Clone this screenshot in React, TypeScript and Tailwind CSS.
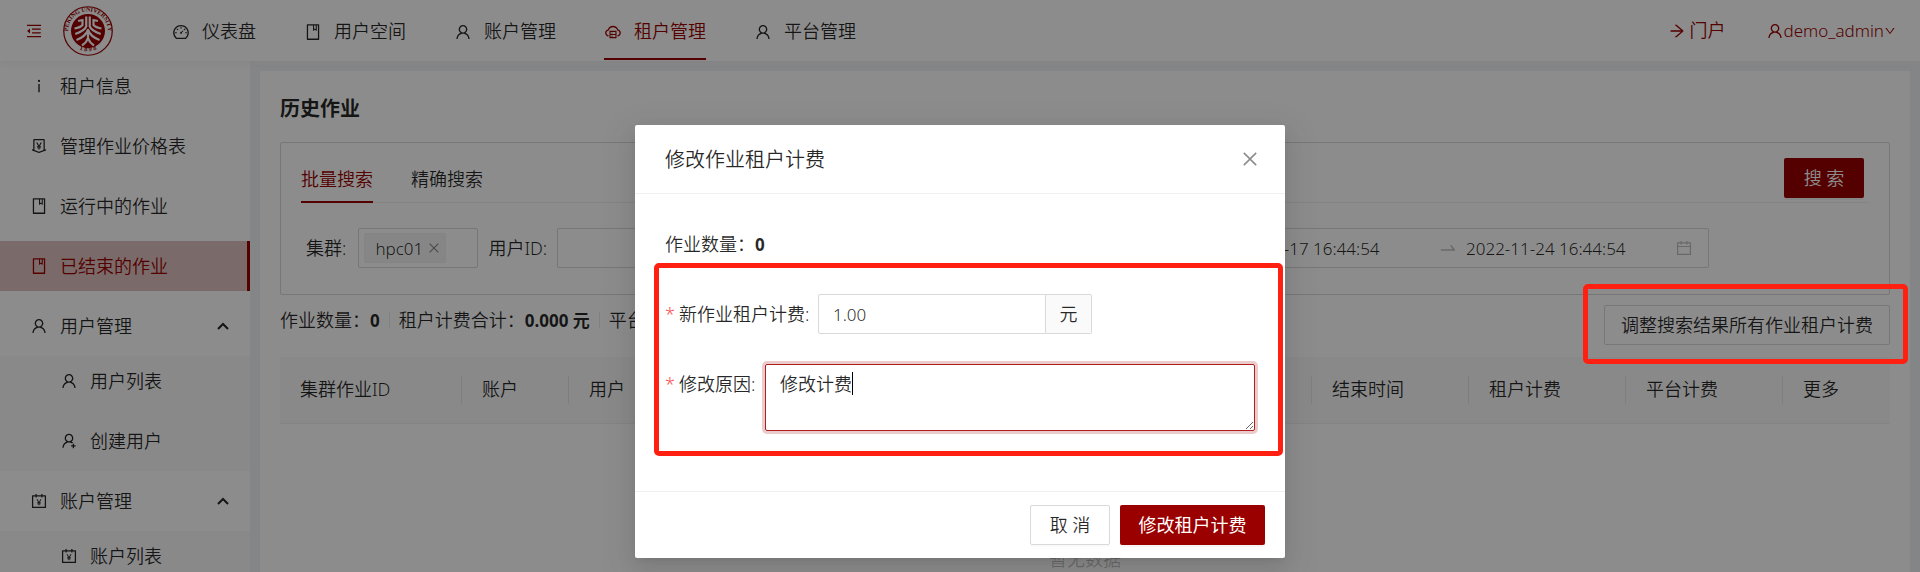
import type { ReactNode } from "react";
import type { IconType } from "react-icons";
import {
  AiOutlineAccountBook,
  AiOutlineArrowRight,
  AiOutlineBook,
  AiOutlineCalendar,
  AiOutlineClose,
  AiOutlineCloudServer,
  AiOutlineDashboard,
  AiOutlineDown,
  AiOutlineInfo,
  AiOutlineMenuFold,
  AiOutlineMoneyCollect,
  AiOutlineSwapRight,
  AiOutlineUser,
  AiOutlineUserAdd,
} from "react-icons/ai";

function Logo() {
  return (
    <svg viewBox="0 0 100 100" className="size-[50px] text-[#9b0000]" aria-hidden="true">
      <defs>
        <path id="logo-top" d="M 14 68 A 40 40 0 1 1 86 68" />
        <path id="logo-bottom" d="M 22 81 A 46 46 0 0 0 78 81" />
      </defs>
      <circle cx="50" cy="50" r="48.5" fill="none" stroke="currentColor" strokeWidth="2.4" />
      <circle cx="50" cy="50" r="34" fill="currentColor" />
      <text fill="currentColor" fontSize="12" fontWeight="700" fontFamily="Liberation Serif, serif" textAnchor="middle">
        <textPath href="#logo-top" startOffset="50%">PEKING UNIVERSITY</textPath>
      </text>
      <text fill="currentColor" fontSize="13" fontWeight="700" fontFamily="Liberation Serif, serif" textAnchor="middle">
        <textPath href="#logo-bottom" startOffset="50%">1 8 9 8</textPath>
      </text>
      <g fill="none" stroke="#fff" strokeWidth="4.4">
        <path d="M46.5 21v20q-3 8-22 15" />
        <path d="M53.5 21v20q3 8 22 15" />
        <path d="M30 30l9-2v10q-4 5-16 7" />
        <path d="M70 30l-9-2v10q4 5 16 7" />
        <path d="M50 48q-5 13-23 20M50 48q5 13 23 20" />
        <path d="M50 46v18q-3 9-12 15M50 64q3 9 12 15" />
      </g>
    </svg>
  );
}

const topNav: { label: string; icon: IconType; active?: boolean }[] = [
  { label: "仪表盘", icon: AiOutlineDashboard },
  { label: "用户空间", icon: AiOutlineBook },
  { label: "账户管理", icon: AiOutlineUser },
  { label: "租户管理", icon: AiOutlineCloudServer, active: true },
  { label: "平台管理", icon: AiOutlineUser },
];

function Header() {
  return (
    <header className="z-10 flex h-[61px] shrink-0 items-center bg-white pr-6 pl-[25px] shadow-[0_2px_8px_#f0f1f2]">
      <button aria-label="收起菜单" className="text-[#9b0000]">
        <AiOutlineMenuFold className="size-[18px]" />
      </button>
      <a href="#home" className="ml-5" aria-label="首页">
        <Logo />
      </a>
      <nav className="ml-[59px] flex h-full flex-1 gap-12">
        {topNav.map(({ label, icon: Icon, active }) => (
          <a
            key={label}
            href="#nav"
            className={
              active
                ? "mb-px flex items-center gap-3 border-b-2 border-[#9b0000] pt-[5px] text-[#9b0000]"
                : "mb-px flex items-center gap-3 border-b-2 border-transparent pt-[5px]"
            }
          >
            <Icon className="size-[18px]" />
            {label}
          </a>
        ))}
      </nav>
      <a href="#portal" className="flex items-center gap-1 text-[#9b0000]">
        <AiOutlineArrowRight className="size-[18px]" />
        门户
      </a>
      <button className="ml-10 flex items-center text-[17px] text-[#9b0000]">
        <AiOutlineUser className="size-[18px]" />
        demo_admin
        <AiOutlineDown className="size-3" />
      </button>
    </header>
  );
}

function SideItem({ icon: Icon, label, active, nested }: { icon: IconType; label: string; active?: boolean; nested?: boolean }) {
  const tone = active ? "border-r-3 border-[#9b0000] bg-[#dec4c1] text-[#9b0000]" : "";
  return (
    <li>
      <a href="#menu" className={`flex h-[50px] items-center gap-3 ${nested ? "pl-[60px]" : "pl-[30px]"} ${tone}`}>
        <Icon className="size-[18px]" />
        {label}
      </a>
    </li>
  );
}

function SideGroup({ icon: Icon, label, children }: { icon: IconType; label: string; children: ReactNode }) {
  return (
    <li className="-mb-[5px]">
      <button className="flex h-[50px] w-full items-center gap-3 pr-5 pl-[30px]">
        <Icon className="size-[18px]" />
        {label}
        <svg viewBox="0 0 14 14" className="ml-auto size-[14px]" fill="none" stroke="currentColor" strokeWidth="2">
          <path d="M2 10l5-5 5 5" />
        </svg>
      </button>
      <ul className="mt-[5px] flex flex-col gap-[10px] bg-[#fafafa] pb-[5px]">{children}</ul>
    </li>
  );
}

function Sidebar() {
  return (
    <aside className="w-[250px] shrink-0 overflow-hidden bg-white">
      <ul className="flex flex-col gap-[10px]">
        <SideItem icon={AiOutlineInfo} label="租户信息" />
        <SideItem icon={AiOutlineMoneyCollect} label="管理作业价格表" />
        <SideItem icon={AiOutlineBook} label="运行中的作业" />
        <SideItem icon={AiOutlineBook} label="已结束的作业" active />
        <SideGroup icon={AiOutlineUser} label="用户管理">
          <SideItem icon={AiOutlineUser} label="用户列表" nested />
          <SideItem icon={AiOutlineUserAdd} label="创建用户" nested />
        </SideGroup>
        <SideGroup icon={AiOutlineAccountBook} label="账户管理">
          <SideItem icon={AiOutlineAccountBook} label="账户列表" nested />
        </SideGroup>
      </ul>
    </aside>
  );
}

function SearchPanel() {
  return (
    <section className="mt-5 rounded-xs border border-[#d9d9d9] px-5 pt-[15px] pb-[26px]">
      <div className="flex justify-between border-b border-[#f0f0f0] pr-[5px]">
        <div role="tablist" className="-mb-px flex gap-[38px]">
          <button role="tab" aria-selected="true" className="border-b-2 border-[#9b0000] text-[#9b0000]">
            批量搜索
          </button>
          <button role="tab" aria-selected="false" className="border-b-2 border-transparent">
            精确搜索
          </button>
        </div>
        <button className="mb-1 h-10 w-20 rounded-xs bg-[#9b0000] text-white shadow-[0_2px_0_rgba(0,0,0,0.04)]">搜 索</button>
      </div>
      <form className="mt-[25px] flex items-center gap-[10px] pl-[5px]">
        <div className="flex items-center gap-3">
          <span>集群:</span>
          <div className="flex h-10 w-[120px] items-center rounded-xs border border-[#d9d9d9] px-[5px]">
            <span className="flex h-[30px] items-center gap-1 rounded-xs border border-[#f0f0f0] bg-[#f5f5f5] pr-1 pl-[10px] text-[17px]">
              hpc01
              <button type="button" aria-label="移除 hpc01" className="text-black/45">
                <AiOutlineClose className="size-[14px]" />
              </button>
            </span>
          </div>
        </div>
        <label className="flex items-center gap-[10px]">
          用户ID:
          <input className="h-10 w-[280px] rounded-xs border border-[#d9d9d9] px-[14px] text-[17px]" />
        </label>
        <label className="flex items-center gap-[10px]">
          账户:
          <input className="h-10 w-[246px] rounded-xs border border-[#d9d9d9] px-[14px] text-[17px]" />
        </label>
        <div className="flex items-center gap-[10px]">
          <span>时间:</span>
          <div className="flex h-10 w-[505px] items-center rounded-xs border border-[#d9d9d9] px-[15px] text-[17px]">
            <input aria-label="开始时间" defaultValue="2022-11-17 16:44:54" className="w-[218px]" />
            <AiOutlineSwapRight className="size-5 text-black/25" />
            <input aria-label="结束时间" defaultValue="2022-11-24 16:44:54" className="ml-2 w-0 flex-1" />
            <AiOutlineCalendar className="size-[18px] text-black/25" />
          </div>
        </div>
      </form>
    </section>
  );
}

const columns: { title: string; width: string }[] = [
  { title: "集群作业ID", width: "w-[182px]" },
  { title: "账户", width: "w-[107px]" },
  { title: "用户", width: "w-[107px]" },
  { title: "分区", width: "w-[107px]" },
  { title: "作业名", width: "" },
  { title: "提交时间", width: "w-[157px]" },
  { title: "结束时间", width: "w-[157px]" },
  { title: "租户计费", width: "w-[157px]" },
  { title: "平台计费", width: "w-[157px]" },
  { title: "更多", width: "w-[107px]" },
];

function JobTable() {
  return (
    <table className="mt-3 w-full table-fixed text-left">
      <thead>
        <tr className="border-b border-[#f0f0f0] bg-[#fafafa]">
          {columns.map(({ title, width }, i) => (
            <th key={title} scope="col" className={`${width} h-[66px] p-0 font-[350]`}>
              <div
                className={
                  i < columns.length - 1
                    ? "flex h-7 items-center border-r border-[#e6e6e6] pl-5"
                    : "flex h-7 items-center pl-5"
                }
              >
                {title}
              </div>
            </th>
          ))}
        </tr>
      </thead>
      <tbody>
        <tr className="border-b border-[#f0f0f0]">
          <td colSpan={columns.length} className="pt-[122px] text-center text-black/25">
            暂无数据
          </td>
        </tr>
      </tbody>
    </table>
  );
}

function Stat({ label, value }: { label: string; value: string }) {
  return (
    <span>
      {label}
      <strong className="text-[17px] font-bold">{value}</strong>
    </span>
  );
}

function Divider() {
  return <span className="h-4 w-px bg-[#ececec]" />;
}

function JobsPage() {
  return (
    <main className="min-w-0 flex-1 bg-[#f0f2f5] px-[10px] pt-[10px]">
      <div className="h-full bg-white px-5 pt-6">
        <h1 className="text-[20px] leading-[27px] font-bold">历史作业</h1>
        <SearchPanel />
        <div className="mt-[10px] flex items-start justify-between">
          <div className="flex h-[30px] items-center gap-[9px]">
            <Stat label="作业数量：" value="0" />
            <Divider />
            <Stat label="租户计费合计：" value="0.000 元" />
            <Divider />
            <Stat label="平台计费合计：" value="0.000 元" />
          </div>
          <button className="h-10 rounded-xs border border-[#d9d9d9] px-4">调整搜索结果所有作业租户计费</button>
        </div>
        <JobTable />
      </div>
    </main>
  );
}

function Required() {
  return <span className="mr-1 text-[#ff4d4f]">*</span>;
}

function FeeDialog() {
  return (
    <div
      role="dialog"
      aria-modal="true"
      aria-labelledby="fee-title"
      className="relative w-[650px] rounded-xs bg-white shadow-[0_4px_8px_-5px_rgba(0,0,0,0.12),0_8px_20px_rgba(0,0,0,0.08),0_11px_35px_10px_rgba(0,0,0,0.05)]"
    >
      <div className="flex h-[69px] items-center justify-between border-b border-[#f0f0f0] pr-[25px] pl-[30px]">
        <h2 id="fee-title" className="text-[20px]">修改作业租户计费</h2>
        <button aria-label="关闭" className="text-black/45">
          <AiOutlineClose className="size-5" />
        </button>
      </div>
      <form>
        <div className="px-[30px] pt-[37px] pb-[60px]">
          <p>
            作业数量：<strong className="text-[17px] font-bold">0</strong>
          </p>
          <div className="mt-9 flex items-center">
            <label htmlFor="fee" className="w-[153px]">
              <Required />
              新作业租户计费:
            </label>
            <input
              id="fee"
              defaultValue="1.00"
              className="h-10 w-[228px] rounded-l-xs border border-[#d9d9d9] px-[14px] text-[17px]"
            />
            <span className="flex h-10 w-[46px] items-center justify-center rounded-r-xs border border-l-0 border-[#d9d9d9] bg-[#fafafa]">
              元
            </span>
          </div>
          <div className="mt-[30px] flex items-start">
            <label htmlFor="reason" className="mt-[7px] w-[100px]">
              <Required />
              修改原因:
            </label>
            <div className="relative flex flex-1">
              <textarea
                id="reason"
                defaultValue="修改计费"
                className="h-[67px] w-full rounded-xs border border-[#af1d1d] px-[14px] py-[6px] shadow-[0_0_0_3px_rgba(155,0,0,0.2)] outline-none"
              />
              <span className="absolute top-2 left-[87px] h-[23px] w-px bg-black" />
            </div>
          </div>
        </div>
        <div className="flex justify-end gap-[10px] border-t border-[#f0f0f0] px-5 py-[13px]">
          <button type="button" className="h-10 w-20 rounded-xs border border-[#d9d9d9] shadow-[0_2px_0_rgba(0,0,0,0.02)]">
            取 消
          </button>
          <button type="button" className="h-10 w-[145px] rounded-xs bg-[#9b0000] font-normal text-white shadow-[0_2px_0_rgba(0,0,0,0.04)]">
            修改租户计费
          </button>
        </div>
      </form>
      <div className="pointer-events-none absolute top-[138px] right-[2px] left-[19px] h-[193px] rounded-[5px] border-5 border-[#ff2012]" />
    </div>
  );
}

export default function App() {
  return (
    <div className="relative flex h-screen flex-col overflow-hidden bg-[#f0f2f5] font-['Noto_Sans','Noto_Sans_CJK_SC',sans-serif] text-[18px] leading-[27px] font-[350] text-black/85">
      <Header />
      <div className="flex min-h-0 flex-1">
        <Sidebar />
        <JobsPage />
      </div>
      <div className="absolute inset-0 z-20 flex items-start justify-center bg-black/45 pt-[125px]">
        <FeeDialog />
      </div>
      <div className="pointer-events-none absolute top-[284px] right-3 z-30 h-20 w-[325px] rounded-[5px] border-5 border-[#ff2012]" />
    </div>
  );
}
